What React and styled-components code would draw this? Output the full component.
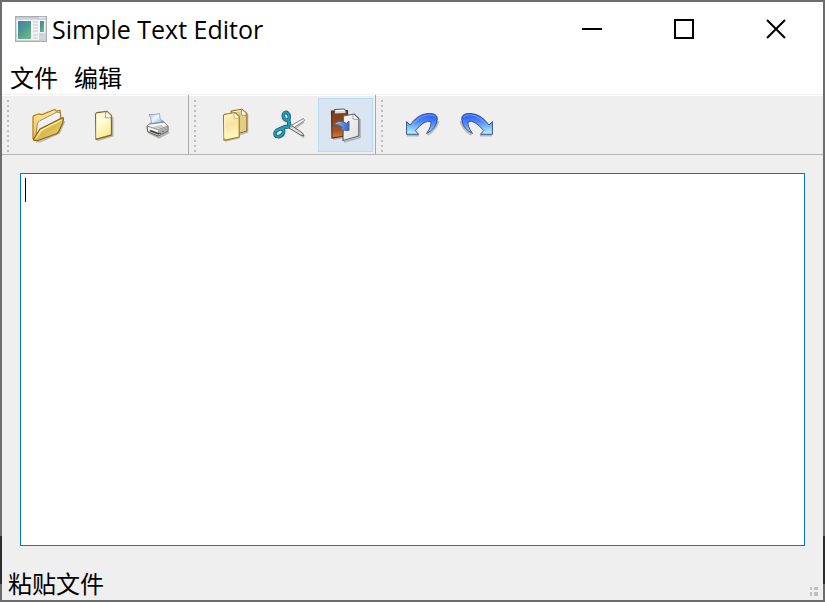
import React, { useState } from "react";
import styled, { createGlobalStyle } from "styled-components";

const GlobalStyle = createGlobalStyle`
  * { box-sizing: border-box; }
  html, body { margin: 0; height: 100%; }
  body, button, textarea {
    font-family: "Noto Sans", "Noto Sans CJK SC", sans-serif;
    font-size: 24px;
    line-height: 32px;
    color: #000;
  }
  button { margin: 0; padding: 0; border: 0; background: none; }
`;

const Frame = styled.div`
  display: flex;
  min-height: 100vh;
  padding: 2px;
  background: linear-gradient(#6e6d6e 0 89%, #2c2c2c 89% 97%, #6c6c6c 97%);
`;

const Window = styled.main`
  flex: 1;
  min-width: 0;
  display: flex;
  flex-direction: column;
  background: #efefef;
`;

const TitleBar = styled.header`
  display: flex;
  align-items: center;
  height: 54px;
  padding: 0 1px 0 13px;
  background: #fff;
`;

const Title = styled.h1`
  flex: 1;
  margin: 0 0 0 5px;
  font-family: "Open Sans", "Noto Sans", sans-serif;
  font-size: 25px;
  font-weight: 400;
  white-space: nowrap;
`;

const WindowButton = styled.button`
  display: grid;
  place-items: center;
  width: 92px;
  height: 54px;
  &:hover { background: #e5e5e5; }
`;

const MenuBar = styled.nav`
  display: flex;
  gap: 16px;
  height: 38px;
  padding: 6px 8px 0;
  background: #fff;
`;

const MenuItem = styled.button`
  height: 32px;
`;

const ToolBars = styled.div`
  display: flex;
  height: 61px;
  border-top: 1px solid #f0f0f0;
  border-bottom: 1px solid #b5b5b5;
  box-shadow: inset 0 1px #fff;
`;

const ToolGroup = styled.div`
  display: flex;
  padding: 3px 2px 2px 5px;
  border-right: 1px solid ${(p) => (p.$last ? "transparent" : "#a8a8a8")};
`;

const Grip = styled.span`
  width: 2px;
  height: 52px;
  margin: 2px 12px 0 0;
  background: repeating-linear-gradient(#bdbdbd 0 2px, transparent 2px 5px);
`;

const ToolButton = styled.button`
  display: grid;
  place-items: center;
  width: 55px;
  height: 54px;
  padding-right: 1px;
  border: 1px solid ${(p) => (p.$active ? "#b8dbf5" : "transparent")};
  background: ${(p) => (p.$active ? "#d9e6f1" : "transparent")};
  svg { overflow: visible; }
`;

const Content = styled.section`
  position: relative;
  flex: 1;
  display: flex;
  padding: 18px;
`;

const Editor = styled.textarea`
  flex: 1;
  min-width: 0;
  padding: 4px;
  border: 1px solid #0078d7;
  border-radius: 0;
  outline: 0;
  resize: none;
  background: #fff;
`;

const Caret = styled.span`
  position: absolute;
  top: 23px;
  left: 23px;
  width: 1px;
  height: 24px;
  background: #000;
  pointer-events: none;
`;

const StatusBar = styled.footer`
  display: flex;
  align-items: flex-end;
  justify-content: space-between;
  height: 36px;
  padding: 0 5px 0 6px;
`;

const GripCorner = styled.svg`
  margin-bottom: 4px;
`;

function AppIcon() {
  return (
    <svg width="32" height="26" viewBox="0 0 32 26" aria-hidden="true">
      <defs>
        <linearGradient id="screen" x1="0" y1="0" x2=".7" y2="1">
          <stop stopColor="#487fae" /><stop offset=".5" stopColor="#4b9a92" /><stop offset="1" stopColor="#69b889" />
        </linearGradient>
        <linearGradient id="frame" x1="0" y1="0" x2="0" y2="1">
          <stop stopColor="#b9c1cb" /><stop offset=".2" stopColor="#e4e8ec" /><stop offset="1" stopColor="#cbd0d6" />
        </linearGradient>
      </defs>
      <rect x=".5" y=".5" width="31" height="25" fill="url(#frame)" stroke="#a6adb5" />
      <rect x="2" y="4" width="15" height="20" fill="#f8fafb" />
      <rect x="3" y="5" width="13" height="18" fill="url(#screen)" />
      <rect x="17" y="4" width="7" height="20" fill="#f3f3f3" />
      <rect x="24" y="4" width="6" height="13" fill="#f5f5f5" />
      <rect x="25" y="5" width="4" height="11" fill="url(#screen)" />
      <path d="M18 6h5M18 9h5M18 12h5M18 15h5M18 19h5M18 22h5M25 19h4" stroke="#c5c8ca" />
      <path d="M24 1.5h6" stroke="#eef2f5" />
    </svg>
  );
}

function OpenIcon() {
  return (
    <svg width="32" height="32" viewBox="0 0 32 32" aria-hidden="true">
      <defs>
        <linearGradient id="folder" x1="0" y1="0" x2="0" y2="1">
          <stop stopColor="#ffe79a" /><stop offset="1" stopColor="#f5b850" />
        </linearGradient>
        <linearGradient id="flap" x1="0" y1="0" x2="1" y2="1">
          <stop stopColor="#fff3a0" /><stop offset=".5" stopColor="#d8b84e" /><stop offset="1" stopColor="#f0dc78" />
        </linearGradient>
      </defs>
      <path d="M4 32.5 8 32.5 27 24 32.5 12" fill="none" stroke="#888" strokeOpacity=".5" strokeWidth="2" />
      <path d="M1 30V8Q1 7 2 6.6L7 4.8 10 5.6 22 .8Q23.5 .3 24.2 2L28 1.5 29 9 9 20 3 31Z" fill="url(#folder)" stroke="#b87912" strokeWidth="1.2" />
      <path d="M4 25 5.5 14 7.5 12 25 3 28.5 4 28 10 9 20Z" fill="#eef0f6" stroke="#8c7137" strokeWidth=".8" />
      <path d="M7 13.5 25 4.5 27 5.5 27 9" stroke="#fff" fill="none" />
      <path d="M2 31.5Q1.2 31 2 29.5L8 20 30 9Q31.6 8 31.5 10L30.7 14 26.5 23 25 24.5 6 31.5Z" fill="url(#flap)" stroke="#8e610e" strokeWidth="1.2" />
      <path d="M4 29.5 9 21.5 29.5 11" fill="none" stroke="#fff5a5" strokeWidth="1.2" />
    </svg>
  );
}

function PaperGradient({ id }) {
  return (
    <linearGradient id={id} x1="0" y1="0" x2=".4" y2="1">
      <stop stopColor="#fffdf0" /><stop offset=".5" stopColor="#fffbd0" /><stop offset="1" stopColor="#fbeb92" />
    </linearGradient>
  );
}

function NewIcon() {
  return (
    <svg width="32" height="32" viewBox="0 0 32 32" aria-hidden="true">
      <defs><PaperGradient id="newPaper" /></defs>
      <path d="M10 31.5 25.8 27V8" fill="none" stroke="#777" strokeOpacity=".45" strokeWidth="1.5" />
      <path d="M8.6 6Q8.6 4 10 3.7L20 2.5 24.500 6.5V26L9 30.3Z" fill="url(#newPaper)" stroke="#8a651e" strokeWidth="1.3" strokeLinejoin="round" />
      <path d="M9.8 29V5L19 3.8" fill="none" stroke="#fff7c9" />
      <path d="M18.5 3Q19 8.5 18 8.7L24 9V6.5L20.5 3Z" fill="#f7f7f3" stroke="#998b72" strokeWidth=".8" />
    </svg>
  );
}

function PrintIcon() {
  return (
    <svg width="32" height="32" viewBox="0 0 32 32" aria-hidden="true">
      <defs>
        <linearGradient id="sheet" x1="0" y1="0" x2="1" y2="1">
          <stop stopColor="#83b9fb" /><stop offset=".45" stopColor="#f5faff" /><stop offset="1" stopColor="#78aef1" />
        </linearGradient>
      </defs>
      <path d="M6 23 17 28.5 27 23" stroke="#777" strokeOpacity=".5" strokeWidth="2" fill="none" />
      <path d="M5 17 10 13.5 20 12 26 17V22L16 27 5.5 22.5Z" fill="#d7d7d4" stroke="#555" />
      <path d="M5 17 10 13 21 12 26 17 16 20.5Z" fill="#f6f6f3" stroke="#777" strokeWidth=".8" />
      <path d="M8 15.5 10.5 13 20.5 12 22 13.5Z" fill="#686868" />
      <path d="M7 5.4Q13 6 17.5 4.5L18 9 20.5 13 9.5 14.5 9 10Z" fill="url(#sheet)" stroke="#8193ac" strokeWidth=".7" />
      <path d="M6 18 16 21.5V26L6 22Z" fill="#f2f2ef" />
      <path d="m16 21.5 9.5-3.5v3.5L16 26Z" fill="#a9aaa8" />
      <path d="m7 22 9 3.5 2-1-9-3.5Z" fill="#333" />
      <path d="m11 18.5 9-2M13 19.5l8-2" stroke="#aaa" strokeWidth=".8" />
      <path d="M20 22.5h2" stroke="#32ad4b" /><path d="M17 24.5h2" stroke="#3a5ba5" />
    </svg>
  );
}

function CopyIcon() {
  return (
    <svg width="32" height="32" viewBox="0 0 32 32" aria-hidden="true">
      <defs>
        <linearGradient id="copyFront" x1="0" y1="0" x2=".2" y2="1">
          <stop stopColor="#fff3bd" /><stop offset=".5" stopColor="#f8e3a0" /><stop offset="1" stopColor="#fffbc0" />
        </linearGradient>
      </defs>
      <path d="m20 26 8.5-3V5M6 32l14.5-3.500" fill="none" stroke="#777" strokeOpacity=".5" strokeWidth="1.5" />
      <path d="M12 2 23 .2 27.8 4V22L14 26Z" fill="#e0ce84" stroke="#8e6b22" strokeLinejoin="round" />
      <path d="M14 3 22 1.5" stroke="#fff8bd" />
      <path d="M22.5 1V6L27 6.5V4L23.5 1Z" fill="#faf9ee" stroke="#9b8655" strokeWidth=".8" />
      <path d="M4.5 7Q4.5 5.6 5.7 5.4L16 3.5 20.2 7.5V28L5 31.3Z" fill="url(#copyFront)" stroke="#a97a20" strokeWidth="1.2" strokeLinejoin="round" />
      <path d="M5.8 29V6.8L14 5.2" fill="none" stroke="#fffbd5" />
      <path d="M15 4.5V9L19.5 9.7V7.5L16 4Z" fill="#fffdf3" stroke="#c8a75b" strokeWidth=".8" />
    </svg>
  );
}

function CutIcon() {
  return (
    <svg width="32" height="32" viewBox="0 0 32 32" aria-hidden="true">
      <path d="m18 19 12 9.500M4 29.500l7-3.500M20 20l10-7" stroke="#777" strokeOpacity=".4" strokeWidth="2" />
      <path d="M14.500 18 29.500 9.500 30.500 11.500 18 20Z" fill="#f6f6f6" stroke="#777" strokeWidth=".9" strokeLinejoin="round" />
      <path d="M14 14 28.500 24 30 27 26.500 26 15 19Z" fill="#dedede" stroke="#555" strokeWidth=".9" strokeLinejoin="round" />
      <g fill="none">
        <path d="M14.500 11 15.500 17.500M6 20.500Q10 17 16 17.500" stroke="#10566b" strokeWidth="4" />
        <ellipse cx="12.300" cy="7.300" rx="2.900" ry="4" stroke="#10566b" strokeWidth="3.600" transform="rotate(-14 12.300 7.300)" />
        <ellipse cx="5.300" cy="23.700" rx="4.800" ry="3.300" stroke="#10566b" strokeWidth="3.600" transform="rotate(-35 5.300 23.700)" />
        <path d="M14.500 11 15.500 17M6 20.500Q10 17.500 15.500 17.500" stroke="#219dba" strokeWidth="2.500" />
        <ellipse cx="12.300" cy="7.300" rx="2.900" ry="4" stroke="#219dba" strokeWidth="2.200" transform="rotate(-14 12.300 7.300)" />
        <ellipse cx="5.300" cy="23.700" rx="4.800" ry="3.300" stroke="#219dba" strokeWidth="2.200" transform="rotate(-35 5.300 23.700)" />
      </g>
      <circle cx="17" cy="17" r="1" fill="#eee" stroke="#555" strokeWidth=".6" />
    </svg>
  );
}

function PasteIcon() {
  return (
    <svg width="32" height="32" viewBox="0 0 32 32" aria-hidden="true">
      <defs>
        <linearGradient id="board" x1="0" y1="0" x2="0" y2="1"><stop stopColor="#7c3512" /><stop offset=".7" stopColor="#a5501f" /><stop offset="1" stopColor="#dd7a2d" /></linearGradient>
        <linearGradient id="pastePaper" x1="0" y1="0" x2="1" y2="1"><stop stopColor="#f8f8fa" /><stop offset="1" stopColor="#dedfe1" /></linearGradient>
        <linearGradient id="pasteArrow"><stop stopColor="#a4c5f7" /><stop offset="1" stopColor="#2c65cc" /></linearGradient>
      </defs>
      <path d="m4 30 10-1.500M15 33l16-4.500V10" fill="none" stroke="#777" strokeOpacity=".5" strokeWidth="1.500" />
      <path d="M2.500 2 18.500 1.500V26.500L3 29Z" fill="url(#board)" stroke="#54311b" strokeWidth="1.200" />
      <path d="M5.500 .5 15.500 0 17 2V4.500L5.500 5Z" fill="#d8d8d8" stroke="#555" />
      <path d="M7 1.700 15 1.300" stroke="#fff" />
      <path d="M14.500 7 25 5 29.800 9.500V27L14 31.500Z" fill="url(#pastePaper)" stroke="#666" strokeWidth="1.200" strokeLinejoin="round" />
      <path d="M24 5.500V10L29.500 10.500" fill="#fff" stroke="#888" strokeWidth=".8" />
      <path d="M5 15.500Q10 9.500 17.500 14.500L20 12V21.500L11 21 13.500 18.500Q10 15 5 15.500Z" fill="url(#pasteArrow)" stroke="#4e6593" strokeLinejoin="round" />
    </svg>
  );
}

function HistoryIcon({ forward = false }) {
  const id = forward ? "redoBlue" : "undoBlue";
  return (
    <svg width="32" height="32" viewBox="0 0 32 32" aria-hidden="true">
      <defs>
        <linearGradient id={id} x1=".6" y1="0" x2=".4" y2="1">
          <stop stopColor="#2860f5" /><stop offset=".4" stopColor="#4c86ff" /><stop offset="1" stopColor="#b4f0ff" />
        </linearGradient>
      </defs>
      <g transform={forward ? "matrix(-1 0 0 1 32 0)" : undefined} strokeLinejoin="round">
        <path d="M1 26.5H13M21.500 26Q31 20 32.500 12" fill="none" stroke="#777" strokeOpacity=".45" strokeWidth="1.800" />
        <path d="M.6 12.500 4 16Q12 5 22 4.500Q31.200 4 31.300 9.500Q31.300 19 20.500 24.600Q26.500 16 24.500 12.500Q19 10.500 9.300 21.500L12.500 25.300H.6Z" fill={`url(#${id})`} stroke="#3b5192" />
        <path d="M4.500 17.500Q13 7 22.500 5.800Q28 5.500 29.500 8" fill="none" stroke="#82a9ff" strokeWidth=".8" />
      </g>
    </svg>
  );
}

function SizeGrip() {
  return (
    <GripCorner width="8" height="9" viewBox="0 0 8 9" aria-hidden="true">
      <path d="M0 0h2v3H0zM4 0h4v3H4zM0 5h2v4H0zM4 5h4v4H4z" fill="#bfbfbf" />
    </GripCorner>
  );
}

const windowActions = [
  { label: "最小化", path: "M0 10H20" },
  { label: "最大化", path: "M1 1H19V19H1Z" },
  { label: "关闭", path: "M1 1 19 19M19 1 1 19" },
];

const groups = [
  [["打开文件", <OpenIcon />], ["新建文件", <NewIcon />], ["打印文件", <PrintIcon />]],
  [["复制文件", <CopyIcon />], ["剪切文件", <CutIcon />], ["粘贴文件", <PasteIcon />]],
  [["撤销", <HistoryIcon />], ["重做", <HistoryIcon forward />]],
];

export default function App() {
  const [active, setActive] = useState("粘贴文件");
  const [text, setText] = useState("");
  return (
    <>
      <GlobalStyle />
      <Frame>
        <Window>
          <TitleBar>
            <AppIcon />
            <Title>Simple Text Editor</Title>
            {windowActions.map(({ label, path }) => (
              <WindowButton key={label} type="button" aria-label={label}>
                <svg width="20" height="20" viewBox="0 0 20 20" fill="none" stroke="#000" strokeWidth="2" aria-hidden="true">
                  <path d={path} />
                </svg>
              </WindowButton>
            ))}
          </TitleBar>
          <MenuBar>
            <MenuItem type="button">文件</MenuItem>
            <MenuItem type="button">编辑</MenuItem>
          </MenuBar>
          <ToolBars role="toolbar">
            {groups.map((tools, index) => (
              <ToolGroup key={index} $last={index === groups.length - 1}>
                <Grip />
                {tools.map(([label, icon]) => (
                  <ToolButton
                    key={label}
                    type="button"
                    aria-label={label}
                    $active={active === label}
                    onMouseEnter={() => setActive(label)}
                  >
                    {icon}
                  </ToolButton>
                ))}
              </ToolGroup>
            ))}
          </ToolBars>
          <Content>
            <Editor aria-label="文本" value={text} onChange={(e) => setText(e.target.value)} />
            {text === "" && <Caret />}
          </Content>
          <StatusBar>
            <span role="status">{active}</span>
            <SizeGrip />
          </StatusBar>
        </Window>
      </Frame>
    </>
  );
}
